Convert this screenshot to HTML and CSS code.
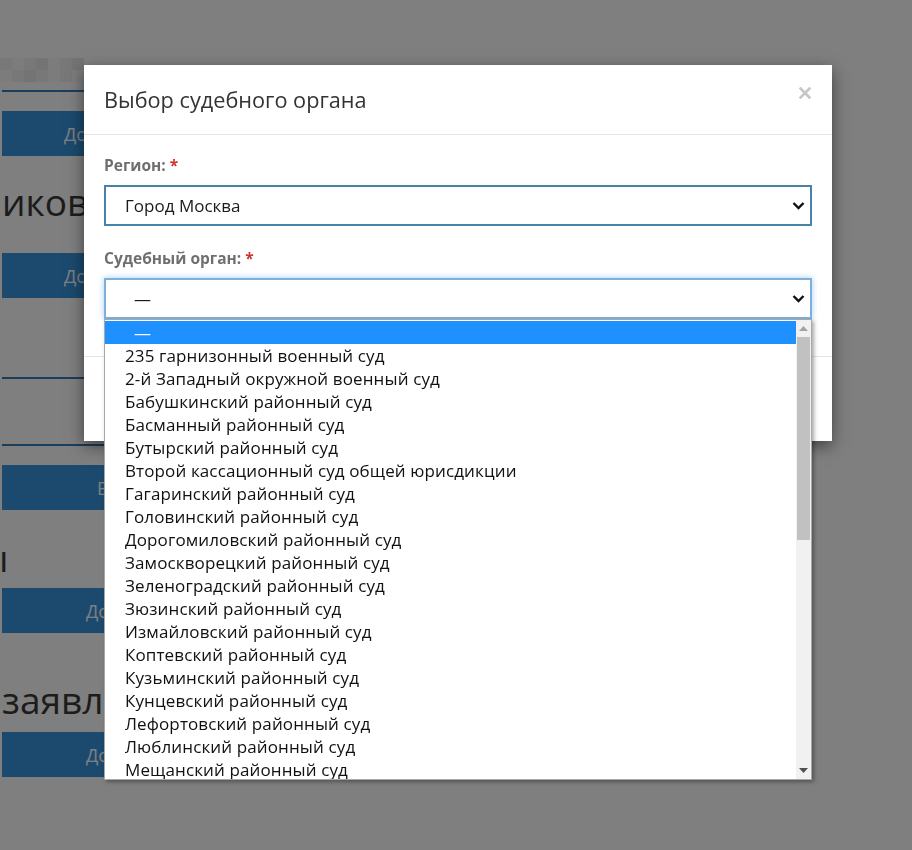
FILE: index.html
```html
<!DOCTYPE html>
<html lang="ru">
<head>
    <meta charset="UTF-8">
    <meta name="viewport" content="width=device-width, initial-scale=1.0">
    <title>Выбор судебного органа</title>
    <link rel="stylesheet" href="styles.css">
</head>
<body>
    <div class="page">
        <div class="mosaic">
            <span class="m1"></span><span class="m2"></span><span class="m1"></span><span class="m3"></span><span class="m2"></span><span class="m1"></span><span class="m3"></span>
            <span class="m2"></span><span class="m1"></span><span class="m3"></span><span class="m1"></span><span class="m2"></span><span class="m1"></span><span class="m2"></span>
        </div>
        <hr class="rule rule-top">
        <button class="btn btn-wide">Добавить</button>
        <h2 class="section-title title-1">иковые заявления</h2>
        <button class="btn btn-wide">Добавить</button>
        <hr class="rule rule-mid">
        <hr class="rule rule-low">
        <button class="btn btn-short">Выбрать</button>
        <h2 class="section-title title-2">ы</h2>
        <button class="btn btn-mid">Добавить</button>
        <h2 class="section-title title-3">заявления</h2>
        <button class="btn btn-mid">Добавить</button>
    </div>

    <div class="backdrop"></div>

    <div class="modal">
        <div class="modal-header">
            <h4>Выбор судебного органа</h4>
            <span class="close">
                <svg width="12" height="12" viewBox="0 0 12 12"><path d="M1.5 1.5 10.5 10.5M10.5 1.5 1.5 10.5" stroke="#c6c6c6" stroke-width="2.6" stroke-linecap="square"/></svg>
            </span>
        </div>
        <div class="modal-body">
            <div class="form-group">
                <label>Регион: <span class="req">*</span></label>
                <div class="select select-filled">
                    <span>Город Москва</span>
                    <svg class="chevron" width="13" height="9" viewBox="0 0 13 9"><path d="M1.5 2 6.5 7 11.5 2" fill="none" stroke="#111" stroke-width="2.4"/></svg>
                </div>
            </div>
            <div class="form-group form-group-open">
                <label>Судебный орган: <span class="req">*</span></label>
                <div class="select select-focus">
                    <span class="dash">—</span>
                    <svg class="chevron" width="13" height="9" viewBox="0 0 13 9"><path d="M1.5 2 6.5 7 11.5 2" fill="none" stroke="#111" stroke-width="2.4"/></svg>
                </div>

                <!-- open list of the select -->
                <div class="dropdown">
                    <ul class="options">
                        <li class="active"><span class="dash">—</span></li>
                        <li>235 гарнизонный военный суд</li>
                        <li>2-й Западный окружной военный суд</li>
                        <li>Бабушкинский районный суд</li>
                        <li>Басманный районный суд</li>
                        <li>Бутырский районный суд</li>
                        <li>Второй кассационный суд общей юрисдикции</li>
                        <li>Гагаринский районный суд</li>
                        <li>Головинский районный суд</li>
                        <li>Дорогомиловский районный суд</li>
                        <li>Замоскворецкий районный суд</li>
                        <li>Зеленоградский районный суд</li>
                        <li>Зюзинский районный суд</li>
                        <li>Измайловский районный суд</li>
                        <li>Коптевский районный суд</li>
                        <li>Кузьминский районный суд</li>
                        <li>Кунцевский районный суд</li>
                        <li>Лефортовский районный суд</li>
                        <li>Люблинский районный суд</li>
                        <li>Мещанский районный суд</li>
                        <li>Московский городской суд</li>
                    </ul>
                    <div class="scrollbar">
                        <svg class="arrow" width="9" height="5" viewBox="0 0 9 5"><path d="M0 5 4.5 0 9 5Z" fill="#a3a3a3"/></svg>
                        <div class="thumb"></div>
                        <div class="track-rest"></div>
                        <svg class="arrow" width="9" height="5" viewBox="0 0 9 5"><path d="M0 0 4.5 5 9 0Z" fill="#505050"/></svg>
                    </div>
                </div>
            </div>
        </div>
        <div class="modal-footer"></div>
    </div>
</body>
</html>
```

FILE: styles.css
```css
body {
    margin: 0;
    background-color: #fff;
    font-family: "Open Sans", Arial, sans-serif;
    color: #333;
    overflow: hidden;
}

.page {
    padding-left: 2px;
    width: 600px;
}

.mosaic {
    display: grid;
    grid-template-columns: repeat(7, 12px);
    grid-auto-rows: 12px;
    margin: 58px 0 0 -2px;
}

.mosaic span { display: block; }
.m1 { background-color: #f0f0f0; }
.m2 { background-color: #f8f8f8; }
.m3 { background-color: #e8e8e8; }

.rule {
    border: none;
    height: 2px;
    background-color: #367cb8;
    margin: 0;
}

.rule-top { margin-top: 8px; }
.rule-mid { margin-top: 79px; }
.rule-low { margin-top: 65px; }

.btn {
    display: block;
    width: 100%;
    height: 45px;
    border: none;
    background-color: #3694dc;
    color: #fff;
    font-family: "Open Sans", Arial, sans-serif;
    font-size: 18px;
    text-align: left;
    padding: 0;
}

.btn-wide { padding-left: 62px; }
.btn-short { padding-left: 95px; }
.btn-mid { padding-left: 84px; }

.rule-top + .btn { margin-top: 19px; }
.rule-mid + .rule-low + .btn { margin-top: 19px; }

.section-title {
    font-size: 37px;
    font-weight: 400;
    line-height: 44px;
    color: #383838;
    margin: 0;
    white-space: nowrap;
}

.title-1 { margin: 24px 0 29px; }
.title-2 { margin: 26px 0 8px -22px; }
.title-3 { margin: 45px 0 10px; }

.backdrop {
    position: fixed;
    inset: 0;
    background-color: rgba(0, 0, 0, 0.5);
}

.modal {
    position: absolute;
    top: 65px;
    left: 84px;
    width: 748px;
    background-color: #fff;
    box-shadow: 0 5px 15px rgba(0, 0, 0, 0.5);
}

.modal-header {
    display: flex;
    justify-content: space-between;
    align-items: flex-start;
    padding: 20px;
    border-bottom: 1px solid #e5e5e5;
}

.modal-header h4 {
    margin: 0;
    font-size: 21.7px;
    font-weight: 400;
    line-height: 29px;
    color: #333;
}

.close {
    display: flex;
    margin: 2px 1px 0 0;
}

.modal-body {
    padding: 20px 20px 37px;
}

.form-group + .form-group {
    margin-top: 22px;
}

.form-group-open {
    position: relative;
}

label {
    display: block;
    font-size: 15.5px;
    font-weight: 700;
    line-height: 20px;
    color: #6f6f6f;
    margin-bottom: 10px;
}

.req {
    color: #d2322d;
}

.select {
    display: flex;
    align-items: center;
    justify-content: space-between;
    height: 41px;
    box-sizing: border-box;
    padding: 0 5px 0 19px;
    font-size: 17px;
    color: #1a1a1a;
    background-color: #fff;
}

.select-filled {
    border: 2px solid #4682a9;
}

.select-focus {
    border: 2px solid #7db1dc;
    box-shadow: 0 0 6px rgba(102, 175, 233, 0.6);
}

.dash {
    padding-left: 9px;
}

.dropdown {
    position: absolute;
    top: 100%;
    left: 0;
    width: 708px;
    height: 461px;
    box-sizing: border-box;
    display: flex;
    border: 1px solid #a8a8a8;
    background-color: #fff;
    box-shadow: 2px 2px 4px rgba(0, 0, 0, 0.35);
    overflow: hidden;
}

.options {
    flex: 1;
    list-style: none;
    margin: 0;
    padding: 1px 0 0;
}

.options li {
    height: 23px;
    line-height: 23px;
    padding-left: 20px;
    font-size: 17px;
    letter-spacing: 0.12px;
    color: #111;
    white-space: nowrap;
}

.options li.active {
    background-color: #1e90ff;
    color: #fff;
}

.scrollbar {
    width: 15px;
    display: flex;
    flex-direction: column;
    align-items: center;
    background-color: #f1f1f1;
}

.scrollbar .arrow {
    flex: none;
    margin: 6px 0;
}

.thumb {
    width: 13px;
    height: 203px;
    background-color: #c1c1c1;
}

.track-rest {
    flex: 1;
}

.modal-footer {
    height: 84px;
    border-top: 1px solid #e5e5e5;
}
```
